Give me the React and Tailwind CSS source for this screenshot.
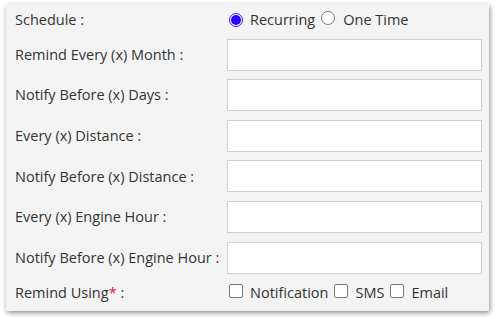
import React from "react";

const Radio = ({ checked }) =>
  checked ? (
    <span className="inline-flex h-[14px] w-[14px] shrink-0 items-center justify-center rounded-full border border-[#2a16f5] bg-white">
      <span className="h-[10px] w-[10px] rounded-full bg-[#2a00ff]" />
    </span>
  ) : (
    <span className="inline-block h-[14px] w-[14px] shrink-0 rounded-full border border-[#777] bg-white" />
  );

const Box = () => (
  <span className="inline-block h-[14px] w-[14px] shrink-0 rounded-[2px] border border-[#777] bg-white" />
);

const fields = [
  "Remind Every (x) Month :",
  "Notify Before (x) Days :",
  "Every (x) Distance :",
  "Notify Before (x) Distance :",
  "Every (x) Engine Hour :",
  "Notify Before (x) Engine Hour :",
];

export default function App() {
  return (
    <div
      className="w-[498px] h-[319px] bg-white pt-[4px] pl-[6px]"
      style={{ fontFamily: '"Open Sans", "Noto Sans", sans-serif' }}
    >
      <div className="flex w-[483px] h-[307px] flex-col bg-[#f3f3f3] pl-[9px] pr-[7px] pt-[5px] text-[14.5px] text-[#333] shadow-[1px_2px_5px_rgba(0,0,0,0.45)]">
        <div className="flex h-[22px] items-center">
          <div className="w-[212px]">Schedule :</div>
          <div className="flex items-center">
            <span className="ml-[2px]"><Radio checked /></span>
            <span className="ml-[7px]">Recurring</span>
            <span className="ml-[6px]"><Radio /></span>
            <span className="ml-[8px]">One Time</span>
          </div>
        </div>
        {fields.map((f, i) => (
          <div
            key={f}
            className={`flex h-[32px] items-center ${i === 0 ? "mt-[7.7px]" : "mt-[8.6px]"}`}
          >
            <div className="w-[212px]">{f}</div>
            <div className="h-[32px] flex-1 border border-[#cfcfcf] bg-white" />
          </div>
        ))}
        <div className="mt-[8px] flex h-[22px] items-center">
          <div className="w-[212px]">
            Remind Using<span className="text-[#e8133b]">*</span> :
          </div>
          <div className="flex items-center">
            <span className="ml-[2px]"><Box /></span>
            <span className="ml-[7px]">Notification</span>
            <span className="ml-[6px]"><Box /></span>
            <span className="ml-[7px]">SMS</span>
            <span className="ml-[6px]"><Box /></span>
            <span className="ml-[7px]">Email</span>
          </div>
        </div>
      </div>
    </div>
  );
}
